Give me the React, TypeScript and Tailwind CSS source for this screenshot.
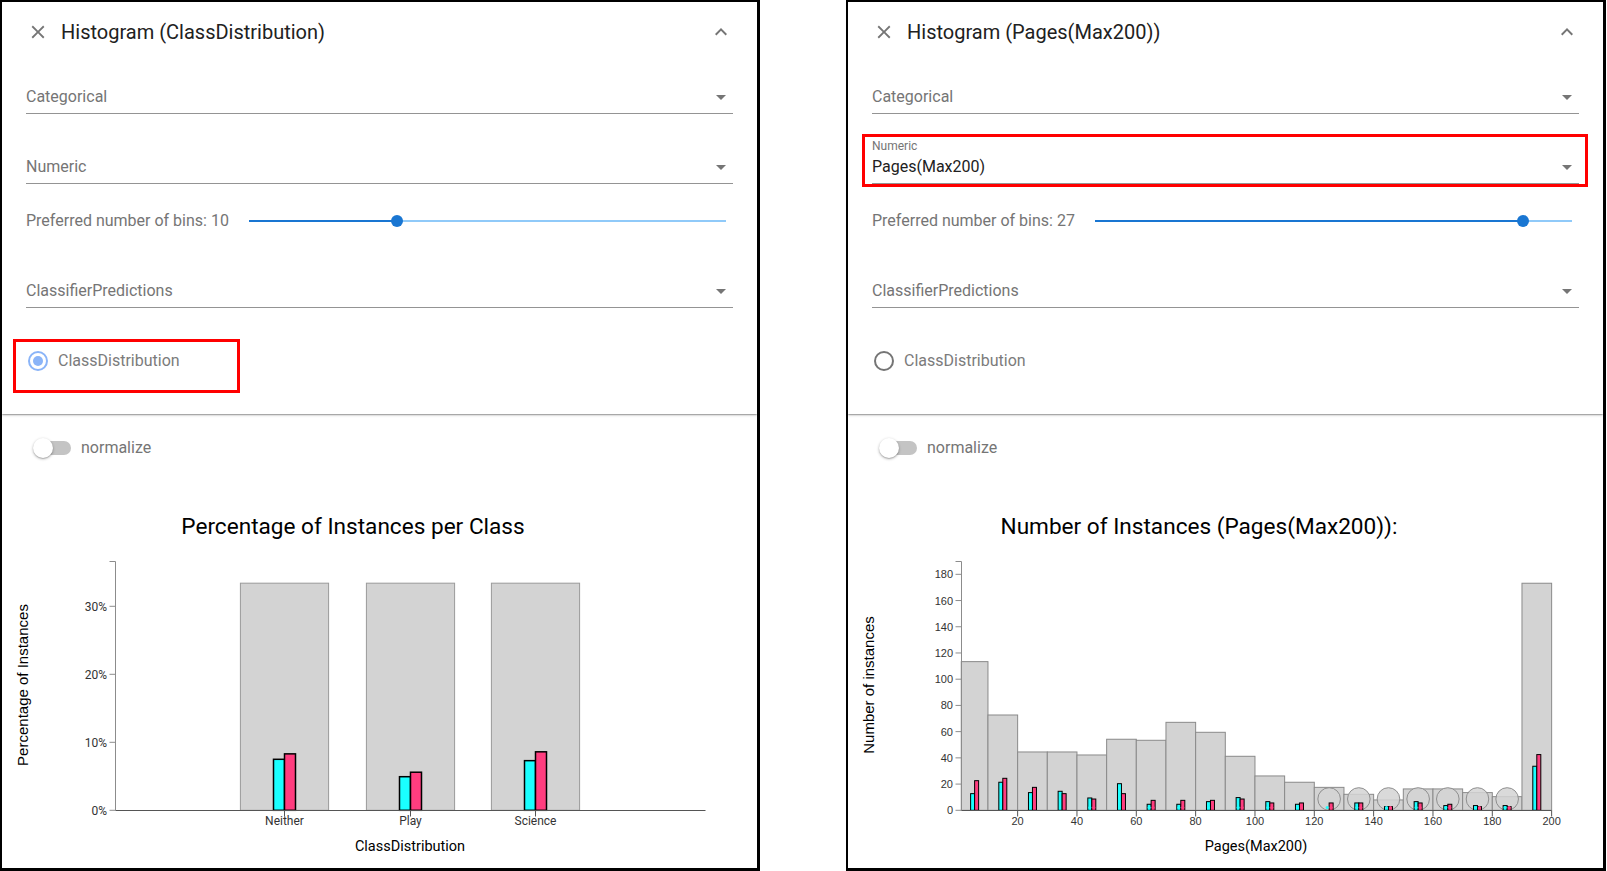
import React from "react";

const CYAN = "#1affff";
const PINK = "#ff3d7f";
const ROBOTO = "Roboto, sans-serif";
const ARIAL = "'Liberation Sans', Arial, sans-serif";

function CloseIcon() {
  return (
    <svg width="22" height="22" viewBox="0 0 24 24" className="shrink-0">
      <path
        fill="#757575"
        d="M19 6.41L17.59 5 12 10.59 6.41 5 5 6.41 10.59 12 5 17.59 6.41 19 12 13.41 17.59 19 19 17.59 13.41 12z"
      />
    </svg>
  );
}

function ExpandLessIcon() {
  return (
    <svg width="24" height="24" viewBox="0 0 24 24" className="shrink-0">
      <path fill="#757575" d="M12 8l-6 6 1.41 1.41L12 10.83l4.59 4.58L18 14z" />
    </svg>
  );
}

function DropIcon() {
  return (
    <svg width="24" height="24" viewBox="0 0 24 24" className="shrink-0">
      <path fill="#757575" d="M7 10l5 5 5-5z" />
    </svg>
  );
}

function SelectField({
  height,
  label,
  value,
  placeholder,
  redBox,
}: {
  height: string;
  label?: string;
  value?: string;
  placeholder: string;
  redBox?: boolean;
}) {
  return (
    <div className={`relative flex flex-col justify-end ${height}`}>
      {label && <div className="mb-px text-[12px] leading-[14px] text-[#757575]">{label}</div>}
      <div className="flex h-[30px] items-start justify-between border-b border-[#949494] pt-px pb-[4px]">
        <span className={`text-[16px] leading-[24px] ${value ? "text-[#212121]" : "text-[#757575]"}`}>
          {value ?? placeholder}
        </span>
        <DropIcon />
      </div>
      {redBox && (
        <div className="absolute left-[-10px] top-[20px] h-[53px] w-[726px] border-[3px] border-[#ff0000]" />
      )}
    </div>
  );
}

function Slider({ value }: { value: number }) {
  const frac = (value - 1) / 29;
  return (
    <div className="relative mr-[7px] ml-[20px] h-[12px] flex-1">
      <div className="absolute left-0 right-0 top-[5px] h-[2px] bg-[#90caf9]" />
      <div className="absolute left-0 top-[5px] h-[2px] bg-[#1976d2]" style={{ width: `${frac * 100}%` }} />
      <div
        className="absolute top-0 h-[12px] w-[12px] -translate-x-1/2 rounded-full bg-[#1976d2]"
        style={{ left: `${frac * 100}%` }}
      />
    </div>
  );
}

function LeftChart() {
  const y = (p: number) => 810.3 - p * 6.8;
  const cats = [
    { name: "Neither", cx: 284.5, c: 7.5, p: 8.3 },
    { name: "Play", cx: 410.5, c: 4.94, p: 5.6 },
    { name: "Science", cx: 535.5, c: 7.3, p: 8.6 },
  ];
  return (
    <svg width={740} height={408} viewBox="2 460 740 408" className="block shrink-0">
      <text x={353} y={534} textAnchor="middle" fontFamily={ROBOTO} fontSize={22.6} fill="#000">
        Percentage of Instances per Class
      </text>
      {cats.map((c) => (
        <g key={c.name}>
          <rect x={c.cx - 44.1} y={y(33.4)} width={88.2} height={810.3 - y(33.4)} fill="#d3d3d3" stroke="#9a9a9a" strokeWidth={1} />
          <rect x={c.cx - 11} y={y(c.c)} width={11} height={810.3 - y(c.c)} fill={CYAN} stroke="#000" strokeWidth={1.5} />
          <rect x={c.cx} y={y(c.p)} width={11} height={810.3 - y(c.p)} fill={PINK} stroke="#000" strokeWidth={1.5} />
          <line x1={c.cx} x2={c.cx} y1={810.5} y2={816.5} stroke="#555" />
          <text x={c.cx} y={825} textAnchor="middle" fontFamily={ROBOTO} fontSize={12} fill="#333">
            {c.name}
          </text>
        </g>
      ))}
      <path d="M109.5,561.5H115.5V810.5" stroke="#8c8c8c" fill="none" />
      <path d="M115.5,810.5H705.5" stroke="#555" fill="none" strokeWidth={1.2} />
      {[0, 10, 20, 30].map((t) => (
        <g key={t}>
          <line x1={109.5} x2={115.5} y1={y(t)} y2={y(t)} stroke="#8c8c8c" />
          <text x={107} y={y(t) + 4.2} textAnchor="end" fontFamily={ROBOTO} fontSize={12} fill="#333">
            {t}%
          </text>
        </g>
      ))}
      <text x={410} y={851} textAnchor="middle" fontFamily={ROBOTO} fontSize={14.5} fill="#000">
        ClassDistribution
      </text>
      <text transform="rotate(-90)" x={-685} y={28} textAnchor="middle" fontFamily={ARIAL} fontSize={15} fill="#000">
        Percentage of Instances
      </text>
    </svg>
  );
}

function RightChart() {
  const x = (v: number) => 112.3 + v * 2.9667;
  const y = (v: number) => 810.3 - v * 1.311;
  const totals = [113.4, 72.7, 44.5, 44.5, 42.2, 54.2, 53.4, 67.1, 59.5, 41.2, 26.2, 21.4, 17.5, 12.2, 7.9, 16.3, 16.3, 13.5, 10.4, 173.2];
  const cyan = [12.7, 21.4, 13.5, 14.5, 9.4, 20.3, 4.6, 4.6, 6.6, 9.7, 6.6, 4.6, 0, 5.6, 2.8, 6.6, 3.6, 3.6, 3.6, 33.6];
  const pink = [22.6, 24.4, 17.5, 12.7, 8.6, 12.7, 7.6, 7.6, 7.6, 8.6, 5.6, 5.6, 5.6, 5.6, 2.8, 5.6, 4.6, 2.8, 2.8, 42.5];
  const dots = [4, 6, 7, 8, 9, 10, 11, 12, 13, 14, 15, 16, 17, 18];
  const bins = totals.map((t, i) => {
    const lo = i === 0 ? 1 : i * 10;
    const hi = i * 10 + 10;
    return { i, x0: x(lo), x1: x(hi), cx: (x(lo) + x(hi)) / 2, t };
  });
  return (
    <svg width={740} height={408} viewBox="2 460 740 408" className="block shrink-0">
      <text x={353} y={534} textAnchor="middle" fontFamily={ROBOTO} fontSize={22.6} fill="#000">
        Number of Instances (Pages(Max200)):
      </text>
      {bins.map((b) => (
        <rect key={b.i} x={b.x0} y={y(b.t)} width={b.x1 - b.x0} height={810.3 - y(b.t)} fill="#d3d3d3" stroke="#8a8a8a" strokeWidth={1} />
      ))}
      {bins
        .filter((b) => b.i >= 12 && b.i <= 18)
        .map((b) => (
          <circle key={b.i} cx={b.cx} cy={799} r={11.3} fill="#d3d3d3" fillOpacity={0.85} stroke="#8f8f8f" strokeWidth={1} />
        ))}
      {bins.map((b) => (
        <g key={b.i}>
          {cyan[b.i] > 0 && (
            <rect x={b.cx - 4} y={y(cyan[b.i])} width={4} height={810.3 - y(cyan[b.i])} fill={CYAN} stroke="#000" strokeWidth={1} />
          )}
          {pink[b.i] > 0 && (
            <rect x={b.cx} y={y(pink[b.i])} width={4} height={810.3 - y(pink[b.i])} fill={PINK} stroke="#000" strokeWidth={1} />
          )}
        </g>
      ))}
      {dots.map((i) => (
        <g key={i}>
          <circle cx={bins[i].cx - 2} cy={807.5} r={1.5} fill={CYAN} />
          <circle cx={bins[i].cx + 2} cy={807.5} r={1.5} fill={PINK} />
        </g>
      ))}
      <path d="M109.5,561.5H115.5V810.5" stroke="#8c8c8c" fill="none" />
      <path d="M115.5,810.5H705.5" stroke="#555" fill="none" strokeWidth={1.2} />
      {[0, 20, 40, 60, 80, 100, 120, 140, 160, 180].map((t) => (
        <g key={t}>
          <line x1={109.5} x2={115.5} y1={y(t)} y2={y(t)} stroke="#8c8c8c" />
          <text x={107} y={y(t) + 4} textAnchor="end" fontFamily={ARIAL} fontSize={11} fill="#333">
            {t}
          </text>
        </g>
      ))}
      {[20, 40, 60, 80, 100, 120, 140, 160, 180, 200].map((t) => (
        <g key={t}>
          <line x1={x(t)} x2={x(t)} y1={810.5} y2={816.5} stroke="#555" />
          <text x={x(t)} y={825} textAnchor="middle" fontFamily={ARIAL} fontSize={11} fill="#333">
            {t}
          </text>
        </g>
      ))}
      <text x={410} y={851} textAnchor="middle" fontFamily={ROBOTO} fontSize={14.5} fill="#000">
        Pages(Max200)
      </text>
      <text transform="rotate(-90)" x={-685} y={28} textAnchor="middle" fontFamily={ARIAL} fontSize={15} fill="#000">
        Number of instances
      </text>
    </svg>
  );
}

function Panel({ right }: { right: boolean }) {
  return (
    <div className="relative flex h-[871px] w-[760px] shrink-0 flex-col border-t-2 border-r-[3px] border-b-[3px] border-l-2 border-black bg-white font-['Roboto',sans-serif]">
      <div className="h-[412px] shrink-0 bg-white px-[24px] shadow-[0_1px_3px_rgba(0,0,0,0.2),0_1px_1px_rgba(0,0,0,0.14),0_2px_1px_-1px_rgba(0,0,0,0.12)]">
        <div className="flex h-[60px] items-center">
          <div className="ml-px">
            <CloseIcon />
          </div>
          <div className="ml-[12px] text-[20px] leading-[24px] text-[#212121]">
            {right ? "Histogram (Pages(Max200))" : "Histogram (ClassDistribution)"}
          </div>
          <div className="ml-auto">
            <ExpandLessIcon />
          </div>
        </div>
        <SelectField height="h-[52px]" placeholder="Categorical" />
        {right ? (
          <SelectField height="h-[70px]" label="Numeric" value="Pages(Max200)" placeholder="Numeric" redBox />
        ) : (
          <SelectField height="h-[70px]" placeholder="Numeric" />
        )}
        <div className="flex h-[74px] items-center">
          <span className="text-[16px] leading-[24px] text-[#757575]">
            Preferred number of bins: {right ? 27 : 10}
          </span>
          <Slider value={right ? 27 : 10} />
        </div>
        <SelectField height="h-[50px]" placeholder="ClassifierPredictions" />
        <div className="relative mt-[32px] flex h-[42px] items-center">
          {right ? (
            <div className="ml-[2px] h-[20px] w-[20px] rounded-full border-2 border-[#757575]" />
          ) : (
            <div className="ml-[2px] flex h-[20px] w-[20px] items-center justify-center rounded-full border-2 border-[#8ab4f8]">
              <div className="h-[10px] w-[10px] rounded-full bg-[#8ab4f8]" />
            </div>
          )}
          <span className="ml-[10px] text-[16px] leading-[24px] text-[#7b7b7b]">ClassDistribution</span>
          {!right && (
            <div className="absolute left-[-13px] top-[-1px] h-[54px] w-[227px] border-[3px] border-[#ff0000]" />
          )}
        </div>
      </div>
      <div className="mt-[22px] flex h-[24px] items-center pl-[31px]">
        <div className="relative h-[20px] w-[38px]">
          <div className="absolute left-[2px] top-[3px] h-[14px] w-[36px] rounded-full bg-[#c4c4c4]" />
          <div className="absolute left-0 top-0 h-[20px] w-[20px] rounded-full bg-white shadow-[0_1px_3px_rgba(0,0,0,0.3),0_1px_1px_rgba(0,0,0,0.14)]" />
        </div>
        <span className="ml-[10px] text-[16px] leading-[24px] text-[#757575]">normalize</span>
      </div>
      {right ? <RightChart /> : <LeftChart />}
    </div>
  );
}

export default function App() {
  return (
    <div className="flex h-[871px] w-[1607px] overflow-hidden bg-white">
      <Panel right={false} />
      <div className="w-[86px] shrink-0" />
      <Panel right={true} />
    </div>
  );
}
